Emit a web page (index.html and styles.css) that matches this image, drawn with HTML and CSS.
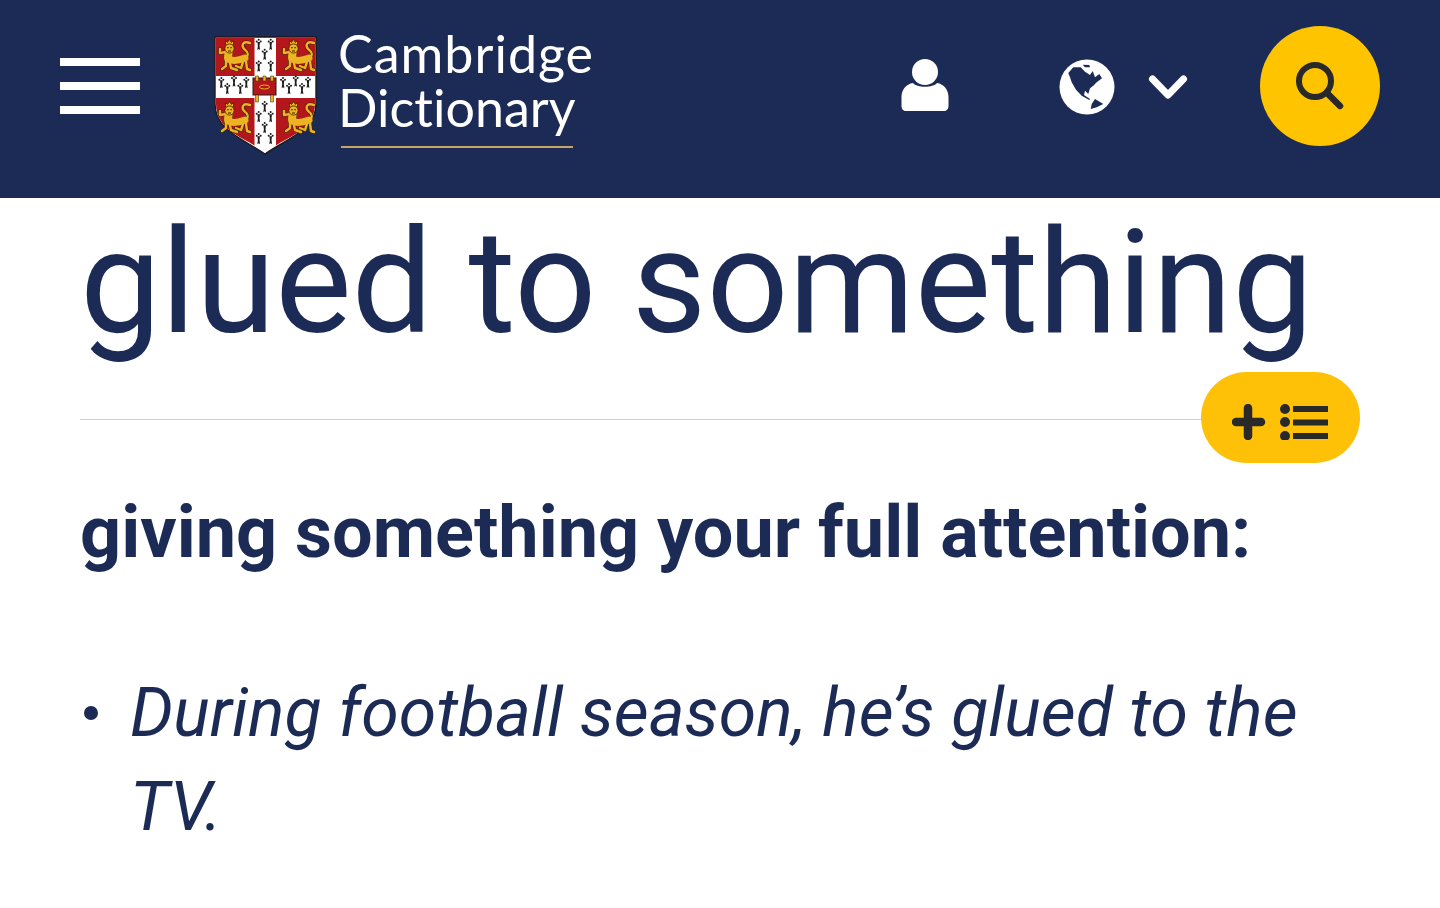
FILE: index.html
```html
<!DOCTYPE html>
<html>
<head>
  <title>glued to something | Cambridge Dictionary</title>
  <meta name="viewport" content="width=device-width, initial-scale=1">
  <link rel="stylesheet" href="styles.css">
</head>
<body>
  <header class="topbar">
    <div class="burger"><span></span><span></span><span></span></div>

    <a class="logo">
      <svg class="crest" width="104" height="120" viewBox="0 0 104 120">
        <defs>
          <g id="ermine" fill="#1d1d1d">
            <circle cx="-2" cy="-3.600" r="1"/><circle cx="2" cy="-3.600" r="1"/><circle cx="0" cy="-5.200" r="1"/>
            <path d="M-1.300 -3 L1.300 -3 L0.800 1 L1.400 5 L0 4 L-1.400 5 L-0.800 1 Z"/>
          </g>
          <g id="lion-shape" fill="none" stroke-linecap="round" stroke-linejoin="round">
            <path d="M31 19 C35 12 24 12 27 6 C28 4 31 4 34 5"/>
            <path d="M10 14 L4 15 L4 11"/>
            <path d="M10 22 L10 28 L6 31"/>
            <path d="M14 25 L15 30 L21 32"/>
            <path d="M27 24 L25 30 L20 28"/>
            <path d="M30 23 L31 31 L34 32"/>
            <path stroke-width="7" d="M12 21 C18 24 24 22 29 20"/>
            <path stroke-width="8" d="M13 11 L12 19"/>
          </g>
          <g id="lion">
            <use href="#lion-shape" stroke="#3d2206" stroke-width="3.600"/>
            <use href="#lion-shape" stroke="#ecb423" stroke-width="2.400"/>
            <path fill="#ecb423" stroke="#3d2206" stroke-width="0.800" d="M9.500 2.500 L11.500 4.500 L13.500 1.500 L15.500 4.500 L17.500 2.500 L17.500 7 L9.500 7 Z"/>
            <circle cx="13.500" cy="10.500" r="4.600" fill="#ecb423" stroke="#3d2206" stroke-width="0.800"/>
            <path fill="#3d2206" d="M11.200 9 h1.400 v1.200 h-1.400 Z M14.400 9 h1.400 v1.200 h-1.400 Z M12 12.500 h3 v0.900 h-3 Z"/>
          </g>
        </defs>
        <path fill="#fff" stroke="#1a1a1a" stroke-width="1.400" d="M1 1 H102 V68 C102 94 74 102 51 118 C28 102 1 94 1 68 Z"/>
        <path fill="#b3161b" d="M2 2 H40.500 V40 H2 Z M62 2 H101 V40 H62 Z"/>
        <path fill="#b3161b" d="M2 62 H40.500 V109.500 C28 101 2 93 2 68 Z M62 62 H101 V68 C101 93 74 101 62 109.500 Z"/>
        <use href="#lion" x="2" y="2"/>
        <use href="#lion" x="66" y="2"/>
        <use href="#lion" x="2" y="64"/>
        <use href="#lion" x="66" y="64"/>
        <use href="#ermine" x="44.700" y="9"/><use href="#ermine" x="56.700" y="9"/>
        <use href="#ermine" x="50.700" y="19"/>
        <use href="#ermine" x="44.700" y="30.700"/><use href="#ermine" x="56.700" y="30.700"/>
        <use href="#ermine" x="7.300" y="47.300"/><use href="#ermine" x="13.300" y="53.300"/><use href="#ermine" x="20" y="45.700"/><use href="#ermine" x="26.300" y="53.300"/><use href="#ermine" x="32.300" y="47.300"/>
        <use href="#ermine" x="69" y="47.300"/><use href="#ermine" x="75" y="53.300"/><use href="#ermine" x="81.700" y="45.700"/><use href="#ermine" x="88" y="53.300"/><use href="#ermine" x="94" y="47"/>
        <use href="#ermine" x="50.700" y="71.300"/>
        <use href="#ermine" x="44.700" y="81.300"/><use href="#ermine" x="56.700" y="81.300"/>
        <use href="#ermine" x="50.700" y="92.300"/>
        <use href="#ermine" x="44.700" y="103.300"/><use href="#ermine" x="56.700" y="103.300"/>
        <rect x="39" y="42" width="23" height="17" fill="#b3161b" stroke="#2a1a10" stroke-width="1"/>
        <path fill="#ecb423" stroke="#3d2206" stroke-width="0.500" d="M41.500 40 h3 v5 h-3 Z M49 40 h3 v5 h-3 Z M56.500 40 h3 v5 h-3 Z M41.500 59 h3 v7 h-3 Z M56.500 59 h3 v7 h-3 Z"/>
        <ellipse cx="50.500" cy="51" rx="5" ry="2" fill="none" stroke="#ecb423" stroke-width="1"/>
      </svg>
      <span class="logo-text">
        <span class="logo-top">Cambridge</span>
        <span>Dictionary</span>
      </span>
    </a>

    <div class="tools">
      <svg class="user-icon" width="48" height="52" viewBox="0 0 48 52">
        <circle cx="24" cy="13" r="13" fill="#fff"/>
        <path fill="#fff" d="M12 24 C16 29 32 29 36 24 C43 25 47.500 31 47.500 38 V47 C47.500 50 45.500 52 43 52 H5 C2.500 52 0.500 50 0.500 47 V38 C0.500 31 5 25 12 24 Z"/>
      </svg>
      <svg class="globe-icon" width="56" height="56" viewBox="0 0 56 56">
        <circle cx="28" cy="28" r="27.500" fill="#fff"/>
        <path fill="#1c2b56" d="M9.300 14 L14.300 8.300 L21.700 8.300 L26 12.700 L31 16 L33.700 12 L36 18.300 L40.300 15 L43 19.300 L37.700 23.300 L34.300 26.700 L31 29.300 L29.300 35 L26 31.700 L25 36 L31 40 L30.300 41 L22.700 36.700 L17 30.700 L12.700 23.300 L11 18.300 Z"/>
        <path fill="#1c2b56" d="M23.700 5.700 L30.300 6 L31 8.300 L26 8.300 Z M36 40 L44.300 45 L37.700 48.300 L31.700 50 L32.700 45 Z"/>
      </svg>
      <svg class="chevron" width="40" height="26" viewBox="0 0 40 26">
        <path d="M4.500 5 L20 21 L35.500 5" fill="none" stroke="#fff" stroke-width="7" stroke-linecap="round" stroke-linejoin="round"/>
      </svg>
      <button class="search-btn">
        <svg width="50" height="50" viewBox="0 0 50 50">
          <circle cx="20" cy="20" r="16" fill="none" stroke="#292929" stroke-width="6"/>
          <path d="M32 32 L45 45" stroke="#292929" stroke-width="6.500" stroke-linecap="round"/>
        </svg>
      </button>
    </div>
  </header>

  <main class="entry">
    <h1 class="headword">glued to something</h1>

    <div class="divider">
      <button class="add-btn">
        <svg width="98" height="36" viewBox="0 0 98 36">
          <path d="M16 4 V32 M4 18 H29" stroke="#292929" stroke-width="8.500" stroke-linecap="round"/>
          <circle cx="53" cy="5" r="5" fill="#292929"/>
          <circle cx="53" cy="18" r="5" fill="#292929"/>
          <circle cx="53" cy="32" r="5" fill="#292929"/>
          <path d="M61 5 H96 M61 18.500 H96 M61 32 H96" stroke="#292929" stroke-width="6"/>
        </svg>
      </button>
    </div>

    <p class="definition">giving something your full attention:</p>

    <ul class="examples">
      <li>During football season, he’s glued to the TV.</li>
    </ul>
  </main>
</body>
</html>
```

FILE: styles.css
```css
* {
  box-sizing: border-box;
}
body {
  margin: 0;
  font-family: Roboto, Arial, sans-serif;
  color: #1c2b56;
  background: #fff;
}
.topbar {
  display: flex;
  align-items: center;
  height: 198px;
  padding: 0 60px 26px;
  background: #1c2b56;
}
.burger {
  display: flex;
  flex-direction: column;
  gap: 16px;
  width: 80px;
}
.burger span {
  display: block;
  height: 8px;
  background: #fff;
}
.logo {
  display: flex;
  align-items: flex-start;
  gap: 20px;
  margin-left: 74px;
  margin-top: 20px;
}
.crest {
  display: block;
}
.logo-text {
  display: flex;
  flex-direction: column;
  font-family: Lato, sans-serif;
  font-size: 52px;
  font-variant-ligatures: none;
  line-height: 54px;
  color: #fff;
  position: relative;
  margin-top: -10px;
  padding-bottom: 14px;
}
.logo-top {
  letter-spacing: 1px;
}
.logo-text::after {
  content: "";
  position: absolute;
  left: 3px;
  bottom: 0;
  width: 232px;
  height: 2px;
  background: #c4a565;
}
.tools {
  display: flex;
  align-items: center;
  margin-left: auto;
}
.user-icon {
  margin-right: 110px;
  margin-bottom: 2px;
}
.globe-icon {
  margin-top: 2px;
}
.chevron {
  margin-left: 33px;
  margin-right: 72px;
  margin-top: 2px;
}
.search-btn {
  display: flex;
  align-items: center;
  justify-content: center;
  width: 120px;
  height: 120px;
  border: none;
  border-radius: 50%;
  padding: 0;
  background: #ffc400;
}
.entry {
  padding: 0 80px;
}
.headword {
  margin: 0;
  font-size: 144px;
  font-weight: 400;
  line-height: 170px;
}
.divider {
  position: relative;
  height: 1px;
  margin-top: 51px;
  background: #e6e62e;
}
.add-btn {
  position: absolute;
  right: 0;
  top: -47px;
  display: flex;
  align-items: center;
  justify-content: center;
  width: 159px;
  height: 91px;
  border: none;
  border-radius: 46px;
  padding: 8px 0 0;
  background: #ffc107;
}
.definition {
  margin: 66px 0 0;
  font-size: 72px;
  font-weight: 700;
  line-height: 94px;
}
.examples {
  list-style: none;
  margin: 86px 0 0;
  padding: 0 0 0 50px;
}
.examples li {
  position: relative;
  font-size: 68px;
  font-style: italic;
  line-height: 94px;
}
.examples li::before {
  content: "";
  position: absolute;
  left: -46px;
  top: 40px;
  width: 14px;
  height: 14px;
  border-radius: 50%;
  background: #1c2b56;
}
```
